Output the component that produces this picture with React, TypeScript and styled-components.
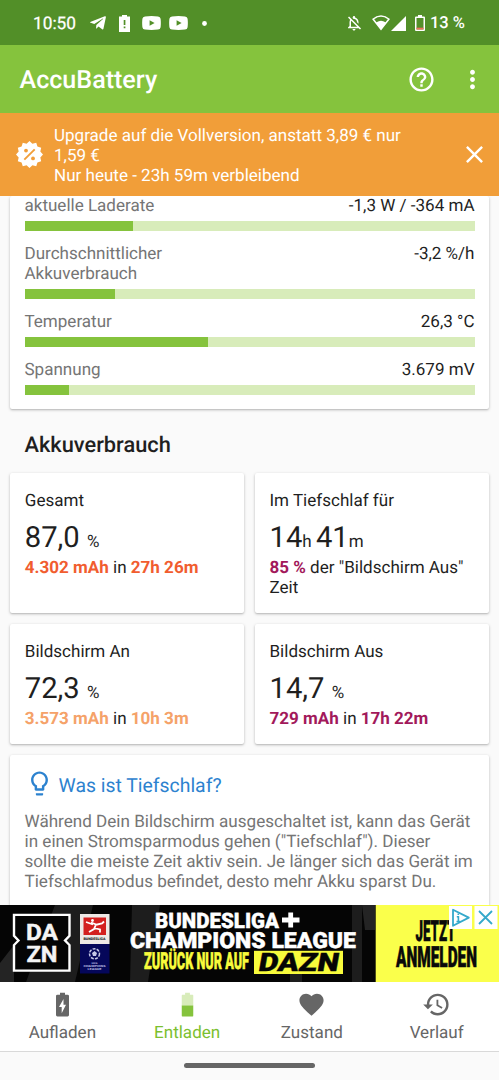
import React from 'react';
import styled, { createGlobalStyle } from 'styled-components';
import {
  MdHelpOutline,
  MdMoreVert,
  MdClose,
  MdLightbulbOutline,
  MdFavorite,
  MdHistory,
  MdOutlineNotificationsOff,
} from 'react-icons/md';
import { FaTelegramPlane } from 'react-icons/fa';

const GlobalStyle = createGlobalStyle`
  *, *::before, *::after { box-sizing: border-box; }
  html, body { margin: 0; padding: 0; }
  body {
    font-family: Roboto, sans-serif;
    background: #fafafa;
    color: #1f1f1f;
    text-rendering: geometricPrecision;
  }
  svg { display: block; }
`;

const Screen = styled.div`
  display: flex;
  flex-direction: column;
  width: 100%;
  height: 1080px;
  overflow: hidden;
  font-size: 17.05px;
  line-height: 20px;
`;

const StatusBar = styled.div`
  display: flex;
  align-items: center;
  flex: none;
  height: 45px;
  padding: 1px 34px 0 33px;
  background: #528f28;
  color: #fff;
`;

const Clock = styled.span`
  width: 43px;
  margin-right: 13px;
  padding-top: 1px;
  font-size: 17.3px;
  font-weight: 400;
  -webkit-text-stroke: 0.25px #fff;
  white-space: nowrap;
`;

const StatusIcon = styled.span<{ $gap?: number }>`
  display: flex;
  margin-right: ${(p) => p.$gap ?? 0}px;
`;

const Spacer = styled.span`
  flex: 1;
`;

const BatteryText = styled.span`
  padding-top: 2px;
  font-size: 16.5px;
  font-weight: 500;
  white-space: nowrap;
`;

const AppBar = styled.header`
  display: flex;
  align-items: center;
  flex: none;
  height: 68px;
  padding: 0 12px 0 19.5px;
  background: #85c33d;
  color: #fff;
`;

const AppTitle = styled.h1`
  flex: 1;
  margin: 4px 0 0;
  font-size: 25.1px;
  line-height: 30px;
  font-weight: 500;
`;

const BarButton = styled.button<{ $gap?: number }>`
  display: flex;
  margin: 0 ${(p) => p.$gap ?? 0}px 0 0;
  padding: 0;
  border: 0;
  background: none;
  color: #fff;
`;

const Upgrade = styled.div`
  display: flex;
  align-items: center;
  flex: none;
  height: 83px;
  padding: 0 10px 0 16px;
  background: #f19e39;
  color: #fff;
`;

const UpgradeText = styled.p`
  flex: 1;
  margin: 3px 0 0 11px;
`;

const Content = styled.main`
  flex: 1;
  min-height: 0;
  overflow: hidden;
  padding: 0 10px;
`;

const Card = styled.section`
  background: #fff;
  border-radius: 2px;
  box-shadow: 0 1px 3px rgba(0, 0, 0, 0.26), 0 1px 1px rgba(0, 0, 0, 0.06);
`;

const MeterCard = styled(Card)`
  display: flex;
  flex-direction: column;
  gap: 13px;
  height: 213px;
  padding: 0 14.5px;
`;

const Meter = styled.div``;

const MeterHead = styled.div`
  display: flex;
  justify-content: space-between;
  align-items: flex-start;
  margin-bottom: 5px;
`;

const MeterLabel = styled.span`
  width: 190px;
  color: #757575;
`;

const MeterValue = styled.span`
  white-space: nowrap;
`;

const Track = styled.div`
  height: 10px;
  background: #d8ecba;
`;

const Fill = styled.div`
  height: 100%;
  background: #85c33d;
`;

const SectionTitle = styled.h2`
  margin: 24px 0 14px 14.5px;
  font-size: 21.8px;
  line-height: 26px;
  font-weight: 500;
`;

const StatGrid = styled.div`
  display: grid;
  grid-template-columns: 1fr 1fr;
  grid-template-rows: 140px 120px;
  gap: 11px 10.4px;
  margin-bottom: 11px;
`;

const StatCard = styled(Card)`
  padding: 18px 12px 0 14.8px;
`;

const StatLabel = styled.div``;

const StatValue = styled.div`
  margin-top: 10px;
  height: 34px;
  font-size: 29.2px;
  line-height: 34px;
  white-space: pre;
`;

const Unit = styled.span`
  font-size: 17px;
`;

const StatDetail = styled.div<{ $color: string }>`
  margin-top: 3px;
  b {
    font-weight: 700;
    color: ${(p) => p.$color};
  }
`;

const InfoCard = styled(Card)`
  height: 180px;
  padding: 14px 14.5px 0;
`;

const InfoTitle = styled.h3`
  display: flex;
  align-items: center;
  gap: 5px;
  margin: 0 0 13px;
  height: 30px;
  color: #2c82cf;
  font-size: 19.4px;
  font-weight: 400;
  svg { margin-top: -1px; }
  span { padding-top: 4px; }
`;

const InfoText = styled.p`
  margin: 0;
  color: #757575;
  font-size: 17.08px;
  white-space: nowrap;
`;

const Ad = styled.aside`
  flex: none;
  height: 77px;
  background: #000;
`;

const Nav = styled.nav`
  display: grid;
  grid-template-columns: repeat(4, 1fr);
  flex: none;
  height: 70px;
  background: #fff;
  border-bottom: 1px solid #d9d9d9;
`;

const NavItem = styled.a<{ $active?: boolean }>`
  display: flex;
  flex-direction: column;
  align-items: center;
  padding-top: 8px;
  gap: 4px;
  color: ${(p) => (p.$active ? '#7cc02f' : '#666')};
`;

const GestureArea = styled.footer`
  display: flex;
  justify-content: center;
  flex: none;
  height: 28px;
  padding-top: 11px;
  background: #fafafa;
`;

const GesturePill = styled.div`
  width: 131px;
  height: 5px;
  border-radius: 3px;
  background: #666;
`;

const AlertBattery = () => (
  <svg width="11" height="17" viewBox="0 0 11 17">
    <path fill="#fff" fillRule="evenodd" d="M3 0h5v1.6h3V17H0V1.600h3zM4.700 5v5h1.700V5zm0 6.400v1.900h1.700v-1.900z" />
  </svg>
);

const Tube = () => (
  <svg width="19" height="14" viewBox="0 0 19 14">
    <path fill="#fff" fillRule="evenodd" d="M3 .4Q9.500-.3 16 .4q2.300.2 2.600 2.300.5 4.300 0 8.600-.3 2.100-2.600 2.300-6.500.7-13 0Q.7 13.400.4 11.300-.1 7 .4 2.700.7.6 3 .4zM7.600 4.200v5.600L12.600 7z" />
  </svg>
);

const Wifi = () => (
  <svg width="18" height="16" viewBox="0 0 18 16">
    <path fill="#fff" fillRule="evenodd" d="M0 4Q9-3.400 18 4L9 15.500zM2.200 4.300l2.300 3Q9 4 13.500 7.300l2.300-3Q9-.6 2.200 4.300z" />
  </svg>
);

const Signal = () => (
  <svg width="15" height="15" viewBox="0 0 15 15">
    <path fill="#fff" d="M15 0v15H0z" />
  </svg>
);

const LowBattery = () => (
  <svg width="10" height="16" viewBox="0 0 10 16">
    <path fill="#fff" fillRule="evenodd" d="M3 0h4v1.400h2q1 0 1 1V15q0 1-1 1H1q-1 0-1-1V2.400q0-1 1-1h2zM1.500 3v11.500h7V3z" />
    <path fill="#f0705a" d="M1.500 12.700h7v1.800h-7z" />
  </svg>
);

const badgePoints = Array.from({ length: 24 }, (_, i) => {
  const r = i % 2 ? 11.2 : 13.5;
  const a = (i * Math.PI) / 12;
  return `${(13.5 + r * Math.sin(a)).toFixed(2)},${(13.5 - r * Math.cos(a)).toFixed(2)}`;
}).join(' ');

const DiscountBadge = () => (
  <svg width="27" height="27" viewBox="0 0 27 27">
    <polygon points={badgePoints} fill="#fff" />
    <path d="M8.300 18.700L18.700 8.300" stroke="#f19e39" strokeWidth="1.900" />
    <circle cx="10" cy="9.600" r="1.900" fill="#f19e39" />
    <circle cx="17" cy="17.400" r="1.900" fill="#f19e39" />
  </svg>
);

const HalfBattery = () => (
  <svg width="12" height="25" viewBox="0 0 12 25">
    <path fill="#d8ecba" d="M3.600 0h4.800v2.200H11q1 0 1 1v10H0v-10q0-1 1-1h2.600z" />
    <path fill="#85c33d" d="M0 13h12v10q0 1-1 1H1q-1 0-1-1z" />
  </svg>
);

const ChargeBattery = () => (
  <svg width="13" height="25" viewBox="0 0 13 25">
    <path fill="#666" fillRule="evenodd" d="M4 0h5v2.200h2.600q1.400 0 1.400 1.400v19q0 1.400-1.400 1.400H1.400Q0 24 0 22.600v-19Q0 2.200 1.400 2.200H4zM7.500 6.500L3 14.500h2.700v6.300L10 12.300H7.500z" />
  </svg>
);

interface AdTextProps {
  x: number;
  y: number;
  size: number;
  width: number;
  stretch?: number;
  weight?: number;
  fill: string;
  slant?: boolean;
  children: string;
}

/* Display lettering: vertical scale gives the condensed look, `width` fixes the line length. */
const AdText = ({ x, y, size, width, stretch = 1, weight = 900, fill, slant, children }: AdTextProps) => (
  <text
    transform={`translate(${x} ${y}) ${slant ? 'skewX(-10)' : ''} scale(1 ${stretch})`}
    fontFamily="Roboto, sans-serif"
    fontWeight={weight}
    fontSize={size}
    textLength={width}
    lengthAdjust="spacingAndGlyphs"
    fill={fill}
    stroke={fill}
    strokeWidth={size > 10 ? 0.4 : 0}
  >
    {children}
  </text>
);

const AdBanner = () => (
  <svg width="499" height="77" viewBox="0 0 499 77">
    <rect width="499" height="77" fill="#050505" />
    <path d="M55 0h38L75 77H26zM132 0h28l-12 77h-18zM352 0h10v77h-10zM290 55h12v22h-12z" fill="#1d1d1d" />
    <path d="M0 58l14-18v37H0zM362 0h13v25h-10z" fill="#242424" />

    <path
      d="M14 10H69.500V32.500L65 37.500L69.500 42.500V70H14V42.500L18.500 37.500L14 32.500Z"
      fill="#050505"
      stroke="#fff"
      strokeWidth="2.400"
      transform="translate(0 .6) scale(1 .93)"
    />
    <AdText x={26} y={35} size={22.5} width={32} weight={700} fill="#f4f4f4">DA</AdText>
    <AdText x={26.5} y={56.5} size={22.5} width={31} weight={700} fill="#f4f4f4">ZN</AdText>

    <rect x="80" y="9" width="29.500" height="30" fill="#eee9e6" />
    <rect x="83.500" y="12.500" width="22.500" height="17.500" fill="#d3201f" />
    <path
      d="M86 17l7 2.500M91 17.500l5 2-2 4.500-5 3M95 20l7-1.500 2-2M94 23l6 1.500v3"
      fill="none"
      stroke="#fff"
      strokeWidth="1.800"
    />
    <circle cx="92.500" cy="15.500" r="1.400" fill="#fff" />
    <AdText x={83.5} y={35.2} size={3.6} width={22} fill="#222">BUNDESLIGA</AdText>
    <rect x="80" y="39" width="29.500" height="29.500" fill="#05075a" />
    <circle cx="94.500" cy="48.800" r="5" fill="none" stroke="#c5c8e6" strokeWidth="1.500" strokeDasharray="3 1.200" />
    <path d="M94.500 46l2.500 2-1 3h-3l-1-3z" fill="#c5c8e6" />
    <AdText x={91.5} y={58.6} size={2.6} width={6} fill="#a9addb">UEFA</AdText>
    <AdText x={83.5} y={61.9} size={2.8} width={22} fill="#a9addb">CHAMPIONS</AdText>
    <AdText x={87.5} y={65.2} size={2.8} width={14} fill="#a9addb">LEAGUE</AdText>

    <AdText x={155} y={23.3} size={20.5} stretch={1.04} width={124} fill="#fff">BUNDESLIGA</AdText>
    <path d="M282 15h17.500M290.700 7.500v15" stroke="#fff" strokeWidth="4.800" />
    <AdText x={130} y={42.7} size={21} stretch={1.06} width={226} fill="#fff">CHAMPIONS LEAGUE</AdText>
    <AdText x={144} y={64.3} size={19} stretch={1.24} width={105} fill="#f8fb3c">ZURÜCK NUR AUF</AdText>
    <rect x="254" y="45.800" width="89" height="23.200" fill="#f8fb3c" />
    <AdText x={257.5} y={66.3} size={25.5} width={80} fill="#050505" slant>DAZN</AdText>

    <rect x="375.700" width="124" height="77" fill="#faff4b" />
    <AdText x={415.5} y={36} size={20} stretch={1.45} width={40} fill="#0a0a0a">JETZT</AdText>
    <AdText x={396} y={61.7} size={20} stretch={1.46} width={81} fill="#0a0a0a">ANMELDEN</AdText>

    <rect x="449" y="1" width="23" height="23" fill="#fff" />
    <path d="M453 4.800v16l15.800-8.200z" fill="none" stroke="#35a9cb" strokeWidth="1.800" strokeLinejoin="round" />
    <path d="M458.300 8.500v1.500M456.800 11.800h1.600v4.700M456.500 16.500h3.800" stroke="#35a9cb" strokeWidth="1.600" fill="none" />
    <rect x="474.500" y="1" width="23" height="23" fill="#fff" />
    <path d="M479 6l13 13M492 6l-13 13" stroke="#35a9cb" strokeWidth="1.800" />
  </svg>
);

const meters = [
  { label: 'aktuelle Laderate', value: '-1,3 W / -364 mA', fill: 24.2 },
  { label: 'Durchschnittlicher Akkuverbrauch', value: '-3,2 %/h', fill: 20 },
  { label: 'Temperatur', value: '26,3 °C', fill: 40.8 },
  { label: 'Spannung', value: '3.679 mV', fill: 9.9 },
];

export default function App() {
  return (
    <Screen>
      <GlobalStyle />
      <StatusBar>
        <Clock>10:50</Clock>
        <StatusIcon $gap={12}><FaTelegramPlane size={18} /></StatusIcon>
        <StatusIcon $gap={12}><AlertBattery /></StatusIcon>
        <StatusIcon $gap={8}><Tube /></StatusIcon>
        <StatusIcon $gap={14}><Tube /></StatusIcon>
        <StatusIcon><svg width="5" height="5"><circle cx="2.500" cy="2.500" r="2.400" fill="#fff" /></svg></StatusIcon>
        <Spacer />
        <StatusIcon $gap={9}><MdOutlineNotificationsOff size={18} /></StatusIcon>
        <StatusIcon $gap={1}><Wifi /></StatusIcon>
        <StatusIcon $gap={9}><Signal /></StatusIcon>
        <StatusIcon $gap={5}><LowBattery /></StatusIcon>
        <BatteryText>13 %</BatteryText>
      </StatusBar>
      <AppBar>
        <AppTitle>AccuBattery</AppTitle>
        <BarButton aria-label="Hilfe" $gap={22}><MdHelpOutline size={29} /></BarButton>
        <BarButton aria-label="Menü"><MdMoreVert size={29} /></BarButton>
      </AppBar>
      <Upgrade>
        <DiscountBadge />
        <UpgradeText>
          Upgrade auf die Vollversion, anstatt 3,89 € nur<br />
          1,59 €<br />
          Nur heute - 23h 59m verbleibend
        </UpgradeText>
        <BarButton aria-label="Schließen"><MdClose size={29} /></BarButton>
      </Upgrade>
      <Content>
        <MeterCard>
          {meters.map((m) => (
            <Meter key={m.label}>
              <MeterHead>
                <MeterLabel>{m.label}</MeterLabel>
                <MeterValue>{m.value}</MeterValue>
              </MeterHead>
              <Track><Fill style={{ width: `${m.fill}%` }} /></Track>
            </Meter>
          ))}
        </MeterCard>
        <SectionTitle>Akkuverbrauch</SectionTitle>
        <StatGrid>
          <StatCard>
            <StatLabel>Gesamt</StatLabel>
            <StatValue>87,0 <Unit>%</Unit></StatValue>
            <StatDetail $color="#f15d2f"><b>4.302 mAh</b> in <b>27h 26m</b></StatDetail>
          </StatCard>
          <StatCard>
            <StatLabel>Im Tiefschlaf für</StatLabel>
            <StatValue>14<Unit>h </Unit>41<Unit>m</Unit></StatValue>
            <StatDetail $color="#a2195b"><b>85 %</b> der "Bildschirm Aus" Zeit</StatDetail>
          </StatCard>
          <StatCard>
            <StatLabel>Bildschirm An</StatLabel>
            <StatValue>72,3 <Unit>%</Unit></StatValue>
            <StatDetail $color="#f5a269"><b>3.573 mAh</b> in <b>10h 3m</b></StatDetail>
          </StatCard>
          <StatCard>
            <StatLabel>Bildschirm Aus</StatLabel>
            <StatValue>14,7 <Unit>%</Unit></StatValue>
            <StatDetail $color="#a2195b"><b>729 mAh</b> in <b>17h 22m</b></StatDetail>
          </StatCard>
        </StatGrid>
        <InfoCard>
          <InfoTitle><MdLightbulbOutline size={29} /><span>Was ist Tiefschlaf?</span></InfoTitle>
          <InfoText>
            Während Dein Bildschirm ausgeschaltet ist, kann das Gerät<br />
            in einen Stromsparmodus gehen ("Tiefschlaf"). Dieser<br />
            sollte die meiste Zeit aktiv sein. Je länger sich das Gerät im<br />
            Tiefschlafmodus befindet, desto mehr Akku sparst Du.
          </InfoText>
        </InfoCard>
      </Content>
      <Ad><AdBanner /></Ad>
      <Nav>
        <NavItem><svg width="29" height="29" viewBox="-8 -2.500 29 29"><ChargeBattery /></svg>Aufladen</NavItem>
        <NavItem $active><svg width="29" height="29" viewBox="-8.500 -2.500 29 29"><HalfBattery /></svg>Entladen</NavItem>
        <NavItem><MdFavorite size={29} />Zustand</NavItem>
        <NavItem><MdHistory size={29} />Verlauf</NavItem>
      </Nav>
      <GestureArea><GesturePill /></GestureArea>
    </Screen>
  );
}
